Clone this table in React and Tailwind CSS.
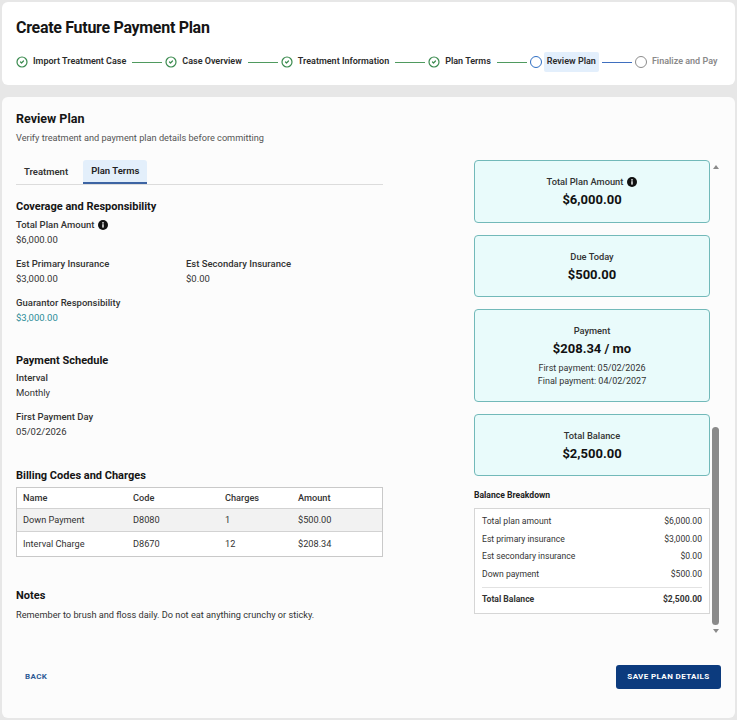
import React from "react";
import { CircleCheck } from "lucide-react";

const F = { fontFamily: "Roboto, 'Noto Sans', sans-serif" };

function Info() {
  return (
    <svg width="10" height="10" viewBox="0 0 10 10" className="inline-block shrink-0">
      <circle cx="5" cy="5" r="5" fill="#111" />
      <rect x="4.3" y="4.2" width="1.4" height="3.4" fill="#fff" />
      <circle cx="5" cy="2.9" r="0.8" fill="#fff" />
    </svg>
  );
}

function Step({ state, label }) {
  return (
    <div className="flex items-center gap-[2px]">
      {state === "done" && <CircleCheck size={12} strokeWidth={2.4} color="#3b8b4f" />}
      {state === "current" && (
        <span className="w-[12px] h-[12px] rounded-full border-[1.6px] border-[#2f6fc4] box-border" />
      )}
      {state === "todo" && (
        <span className="w-[12px] h-[12px] rounded-full border-[1.4px] border-[#8c8c8c] box-border" />
      )}
      <span
        className={
          "px-[3px] h-[20px] flex items-center rounded-[2px] text-[9px] font-semibold " +
          (state === "current"
            ? "bg-[#e3effc] text-[#2b2b2b]"
            : state === "todo"
            ? "text-[#8a8a8a]"
            : "text-[#2b2b2b]")
        }
      >
        {label}
      </span>
    </div>
  );
}

function Line({ color }) {
  return <div className={"w-[30px] h-[1px] mx-[1px] " + color} />;
}

function Field({ label, value, info, teal }) {
  return (
    <div className="flex flex-col gap-[2px]">
      <div className="flex items-center gap-[4px] text-[9.5px] leading-[13px] font-medium text-[#333]">
        {label}
        {info && <Info />}
      </div>
      <div className={"text-[9.5px] leading-[13px] " + (teal ? "text-[#2b8c98]" : "text-[#333]")}>{value}</div>
    </div>
  );
}

function SumCard({ label, value, info, h, children }) {
  return (
    <div
      className={
        "w-full rounded-[4px] border-[1.5px] border-[#72b9b9] bg-[#e9fbfb] flex flex-col items-center justify-center " +
        h
      }
    >
      <div className="flex items-center gap-[4px] text-[9.3px] leading-[13px] font-medium text-[#333]">
        {label}
        {info && <Info />}
      </div>
      <div className="mt-[3px] text-[13px] leading-[17px] font-bold text-[#111]">{value}</div>
      {children}
    </div>
  );
}

function BRow({ l, r, bold }) {
  return (
    <div
      className={
        "flex justify-between items-center h-[17.5px] text-[8.6px] text-[#333] " + (bold ? "font-bold text-[#222]" : "")
      }
    >
      <span>{l}</span>
      <span>{r}</span>
    </div>
  );
}

export default function App() {
  return (
    <div style={F} className="w-[737px] h-[720px] bg-[#e7e7e7] p-[2px] flex flex-col gap-[12px] overflow-hidden">
      {/* Header card */}
      <div className="h-[83px] shrink-0 bg-white rounded-[6px] px-[14px] pt-[16px]">
        <div className="text-[16px] leading-[20px] font-bold tracking-[-0.3px] text-[#151515]">
          Create Future Payment Plan
        </div>
        <div className="mt-[14px] flex items-center gap-[2px]">
          <Step state="done" label="Import Treatment Case" />
          <Line color="bg-[#4f9a5f]" />
          <Step state="done" label="Case Overview" />
          <Line color="bg-[#4f9a5f]" />
          <Step state="done" label="Treatment Information" />
          <Line color="bg-[#4f9a5f]" />
          <Step state="done" label="Plan Terms" />
          <Line color="bg-[#4f9a5f]" />
          <Step state="current" label="Review Plan" />
          <Line color="bg-[#3f6fbf]" />
          <Step state="todo" label="Finalize and Pay" />
        </div>
      </div>

      {/* Main card */}
      <div className="flex-1 bg-[#fcfcfc] rounded-[6px] pl-[14px] pr-[15px] pt-[14px] flex flex-col">
        <div className="text-[12.5px] leading-[16px] font-bold text-[#151515]">Review Plan</div>
        <div className="mt-[5px] text-[9.2px] leading-[12px] text-[#555]">
          Verify treatment and payment plan details before committing
        </div>

        <div className="mt-[16px] flex justify-between">
          {/* Left column */}
          <div className="w-[367px] flex flex-col">
            <div className="h-[25px] flex items-stretch gap-[7px] border-b border-[#dcdcdc]">
              <div className="px-[8px] flex items-center text-[9.5px] font-semibold text-[#333]">Treatment</div>
              <div className="px-[8px] flex items-center text-[9.5px] font-semibold text-[#222] bg-[#e3effb] rounded-t-[3px] border-b-2 border-[#3d64a3]">
                Plan Terms
              </div>
            </div>

            <div className="mt-[15px] text-[11px] leading-[14px] font-bold text-[#151515]">
              Coverage and Responsibility
            </div>
            <div className="mt-[4px]">
              <Field label="Total Plan Amount" value="$6,000.00" info />
            </div>
            <div className="mt-[11px] grid grid-cols-[170px_1fr]">
              <Field label="Est Primary Insurance" value="$3,000.00" />
              <Field label="Est Secondary Insurance" value="$0.00" />
            </div>
            <div className="mt-[11px]">
              <Field label="Guarantor Responsibility" value="$3,000.00" teal />
            </div>

            <div className="mt-[30px] text-[11px] leading-[14px] font-bold text-[#151515]">Payment Schedule</div>
            <div className="mt-[3px]">
              <Field label="Interval" value="Monthly" />
            </div>
            <div className="mt-[11px]">
              <Field label="First Payment Day" value="05/02/2026" />
            </div>

            <div className="mt-[31px] text-[11px] leading-[14px] font-bold text-[#151515]">
              Billing Codes and Charges
            </div>
            <div className="mt-[4px] border border-[#c9c9c9] text-[9.2px] text-[#333]">
              <div className="grid grid-cols-[110px_92px_73px_1fr] px-[6px] h-[21px] items-center font-medium bg-white border-b border-[#d2d2d2]">
                <span>Name</span>
                <span>Code</span>
                <span>Charges</span>
                <span>Amount</span>
              </div>
              <div className="grid grid-cols-[110px_92px_73px_1fr] px-[6px] h-[23px] items-center bg-[#f2f2f2] border-b border-[#d2d2d2]">
                <span>Down Payment</span>
                <span>D8080</span>
                <span>1</span>
                <span>$500.00</span>
              </div>
              <div className="grid grid-cols-[110px_92px_73px_1fr] px-[6px] h-[24px] items-center bg-white">
                <span>Interval Charge</span>
                <span>D8670</span>
                <span>12</span>
                <span>$208.34</span>
              </div>
            </div>

            <div className="mt-[32px] text-[11px] leading-[14px] font-bold text-[#151515]">Notes</div>
            <div className="mt-[5px] text-[9.2px] leading-[13px] text-[#333]">
              Remember to brush and floss daily. Do not eat anything crunchy or sticky.
            </div>
          </div>

          {/* Right column */}
          <div className="flex gap-[1px] h-[477px]">
            <div className="w-[236px] flex flex-col">
              <SumCard label="Total Plan Amount" value="$6,000.00" info h="h-[63px]" />
              <div className="mt-[12px]">
                <SumCard label="Due Today" value="$500.00" h="h-[62px]" />
              </div>
              <div className="mt-[12px]">
                <SumCard label="Payment" value="$208.34 / mo" h="h-[93px]">
                  <div className="mt-[5px] text-[9px] leading-[13px] text-[#333] text-center">
                    First payment: 05/02/2026
                    <br />
                    Final payment: 04/02/2027
                  </div>
                </SumCard>
              </div>
              <div className="mt-[12px]">
                <SumCard label="Total Balance" value="$2,500.00" h="h-[62px]" />
              </div>
              <div className="mt-[13px] text-[8.6px] leading-[12px] font-bold text-[#222]">Balance Breakdown</div>
              <div className="mt-[7px] border border-[#d6d6d6] bg-white px-[7px] pt-[4px] pb-[4px]">
                <BRow l="Total plan amount" r="$6,000.00" />
                <BRow l="Est primary insurance" r="$3,000.00" />
                <BRow l="Est secondary insurance" r="$0.00" />
                <BRow l="Down payment" r="$500.00" />
                <div className="mt-[4px] border-t-[1.5px] border-[#e2e2e2] pt-[3px]">
                  <BRow l="Total Balance" r="$2,500.00" bold />
                </div>
              </div>
            </div>
            {/* scrollbar drawing */}
            <div className="w-[9px] flex flex-col items-center">
              <div className="mt-[5px] w-0 h-0 border-l-[3.5px] border-r-[3.5px] border-b-[4px] border-l-transparent border-r-transparent border-b-[#8a8a8a]" />
              <div className="flex-1" />
              <div className="w-[7px] h-[198px] rounded-[4px] bg-[#8a8a8a]" />
              <div className="mt-[4px] mb-[4px] w-0 h-0 border-l-[3.5px] border-r-[3.5px] border-t-[4px] border-l-transparent border-r-transparent border-t-[#8a8a8a]" />
            </div>
          </div>
        </div>

        <div className="mt-[28px] flex items-center justify-between">
          <button className="ml-[1px] px-[8px] h-[24px] text-[8px] font-bold tracking-[0.4px] text-[#2d5b96]">BACK</button>
          <button className="mr-[-1px] w-[105px] h-[24px] rounded-[3px] bg-[#0c3b7e] text-white text-[8px] font-bold tracking-[0.4px]">
            SAVE PLAN DETAILS
          </button>
        </div>
      </div>
    </div>
  );
}
